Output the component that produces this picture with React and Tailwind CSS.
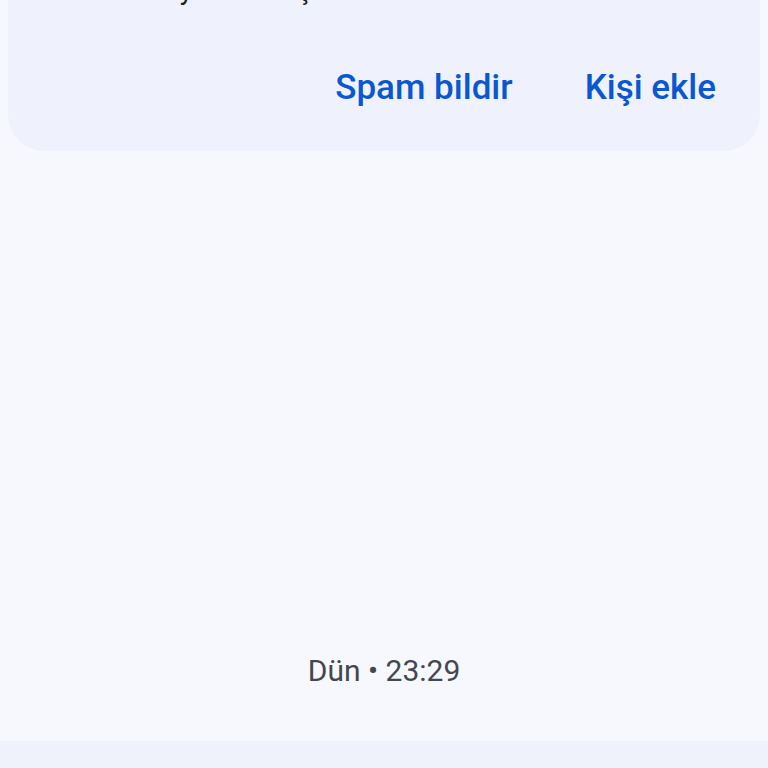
import React from 'react';

const App = () => {
  return (
    <div className="w-[768px] h-[768px] overflow-hidden bg-[#f6f8fe] flex flex-col font-['Roboto',sans-serif]">
      {/* Unknown sender card */}
      <div className="mx-[8px] -mt-[28px] rounded-b-[36px] bg-[#eff2fd] px-[30px] pb-[43px]">
        <p className="text-[28px] leading-[36px] text-[#1f1f1f]">Bu numara yeni bir kişi</p>
        <div className="mt-[60px] flex justify-end items-center gap-[72px] pr-[14px]">
          <button className="text-[35px] leading-[40px] font-medium text-[#0b57d0]">Spam bildir</button>
          <button className="text-[35px] leading-[40px] font-medium text-[#0b57d0]">Kişi ekle</button>
        </div>
      </div>

      {/* Empty thread area */}
      <div className="flex-1 flex flex-col justify-end items-center pb-[52px]">
        <p className="text-[30px] leading-[36px] text-[#44474e]">Dün • 23:29</p>
      </div>

      {/* Composer strip */}
      <div className="h-[27px] bg-[#eff1fb]" />
    </div>
  );
};

export default App;
